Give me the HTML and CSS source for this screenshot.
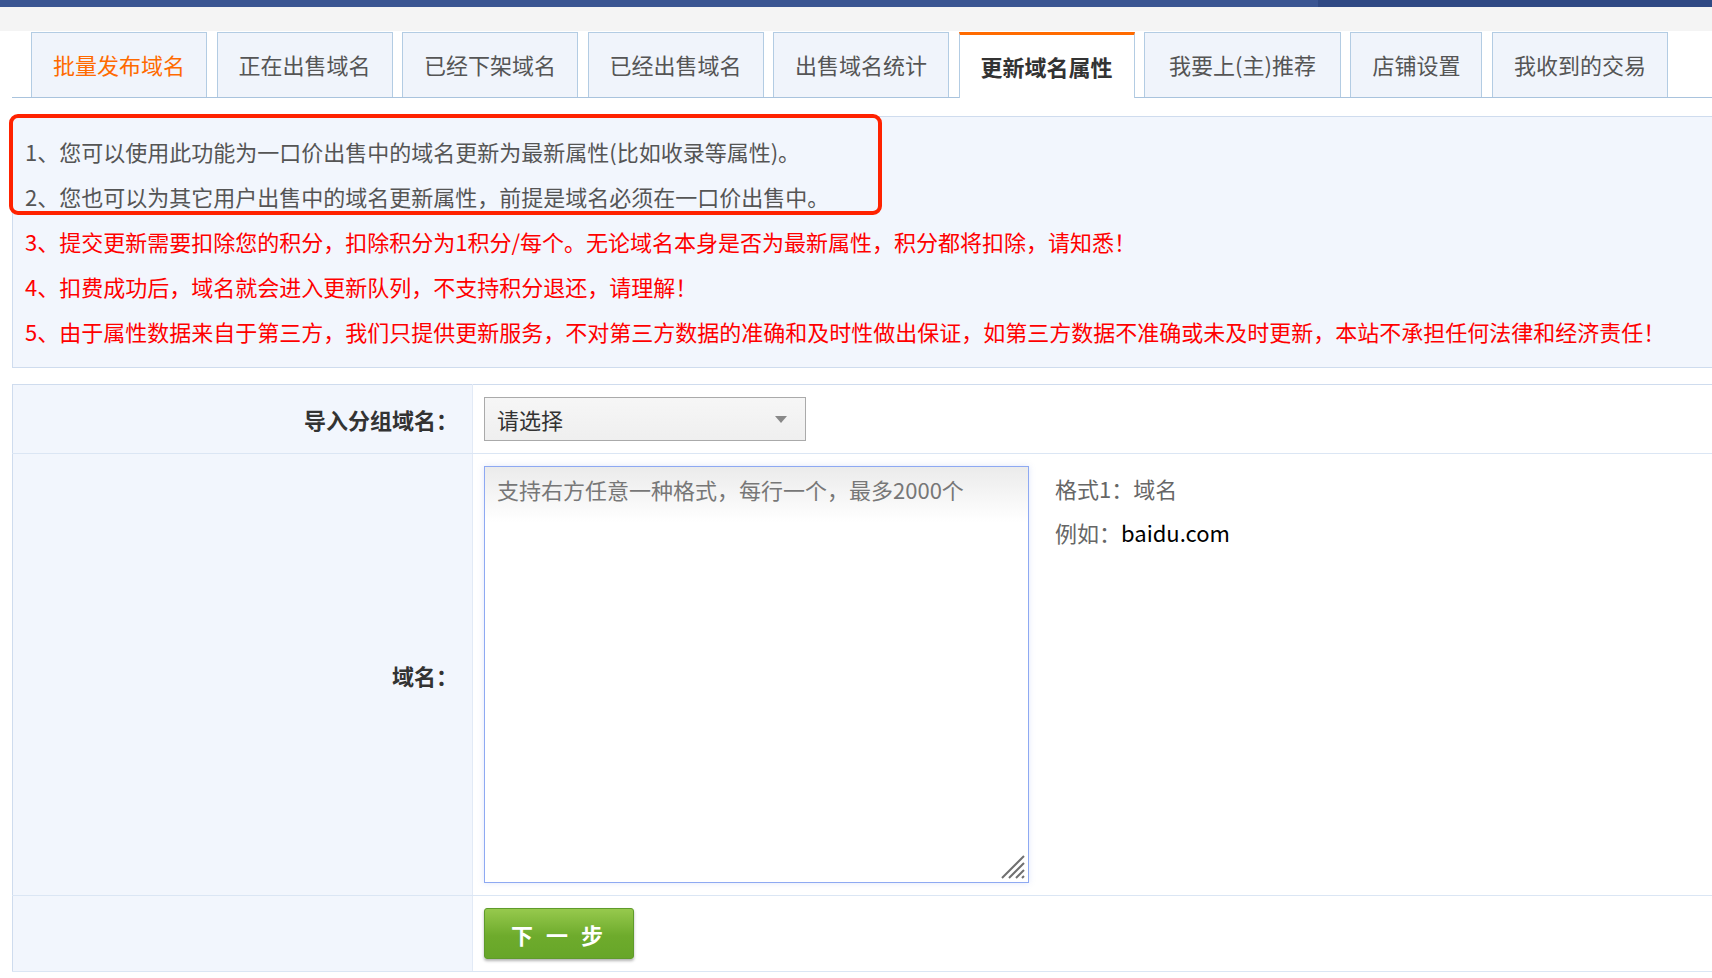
FILE: index.html
```html
<!DOCTYPE html>
<html lang="zh-CN">
<head>
	<meta charset="UTF-8">
	<title>更新域名属性</title>
	<link rel="stylesheet" href="styles.css">
</head>
<body>
	<div class="topbar"></div>
	<div class="subbar"></div>
	<div id="wrap">
		<ul class="tabs">
			<li class="first">批量发布域名</li>
			<li>正在出售域名</li>
			<li>已经下架域名</li>
			<li>已经出售域名</li>
			<li>出售域名统计</li>
			<li class="active">更新域名属性</li>
			<li class="wide">我要上(主)推荐</li>
			<li>店铺设置</li>
			<li>我收到的交易</li>
		</ul>

		<div class="notice">
			<p>1、您可以使用此功能为一口价出售中的域名更新为最新属性(比如收录等属性)。</p>
			<p>2、您也可以为其它用户出售中的域名更新属性，前提是域名必须在一口价出售中。</p>
			<p class="red">3、提交更新需要扣除您的积分，扣除积分为1积分/每个。无论域名本身是否为最新属性，积分都将扣除，请知悉！</p>
			<p class="red">4、扣费成功后，域名就会进入更新队列，不支持积分退还，请理解！</p>
			<p class="red">5、由于属性数据来自于第三方，我们只提供更新服务，不对第三方数据的准确和及时性做出保证，如第三方数据不准确或未及时更新，本站不承担任何法律和经济责任！</p>
			<div class="mark"></div>
		</div>

		<table class="form">
			<tr class="row-select">
				<td class="label">导入分组域名：</td>
				<td class="field">
					<div class="select">
						<select name="group">
							<option>请选择</option>
						</select>
					</div>
				</td>
			</tr>
			<tr class="row-domain">
				<td class="label">域名：</td>
				<td class="field">
					<div class="domain-box">
						<div class="area">
							<textarea name="domains" placeholder="支持右方任意一种格式，每行一个，最多2000个"></textarea>
							<svg class="grip" width="26" height="26" viewBox="0 0 26 26">
								<path d="M2 24 L24 2 M9 24 L24 9 M16 24 L24 16 M22 24 L24 22" stroke="#707070" stroke-width="2"/>
							</svg>
						</div>
						<div class="hints">
							<p>格式1：域名</p>
							<p>例如：<span class="eg">baidu.com</span></p>
						</div>
					</div>
				</td>
			</tr>
			<tr class="row-btn">
				<td class="label"></td>
				<td class="field">
					<button class="btn-next">下 一 步</button>
				</td>
			</tr>
		</table>
	</div>
</body>
</html>
```

FILE: styles.css
```css
*{
	margin: 0;
	padding: 0;
	box-sizing: border-box;
}
body{
	font-family: "Noto Sans CJK SC", "Liberation Sans", sans-serif;
	font-size: 22px;
	color: #555;
	background: #fff;
	overflow: hidden;
}
.topbar{
	height: 7px;
	background: linear-gradient(to right, #3a5592 77%, #2f4984 77%);
}
.subbar{
	height: 24px;
	background-color: #f4f4f4;
}
#wrap{
	width: 1760px;
	padding-left: 12px;
}

/* 标签栏 */
.tabs{
	display: flex;
	list-style: none;
	margin-top: 1px;
	padding-left: 19px;
	height: 66px;
	border-bottom: 1px solid #a9c3dd;
}
.tabs li{
	height: 65px;
	line-height: 63px;
	padding: 0 21px;
	margin-right: 9.5px;
	border: 1px solid #b3cce3;
	border-bottom: none;
	background-color: #f0f4fb;
	color: #555;
	white-space: nowrap;
}
.tabs li.wide{
	padding: 0 24px;
}
.tabs li.first{
	color: #ff6a00;
}
.tabs li.active{
	height: 66px;
	line-height: 62px;
	border-top: 3px solid #ff6a00;
	background-color: #fff;
	color: #333;
	font-weight: bold;
}

/* 提示区 */
.notice{
	position: relative;
	margin-top: 18px;
	padding: 12px 12px 13px;
	line-height: 45px;
	border: 1px solid #cfdcee;
	background-color: #f2f6fd;
	color: #555;
}
.notice p{
	white-space: nowrap;
}
.notice p.red{
	color: #f00;
}
.notice .mark{
	position: absolute;
	left: -4px;
	top: -3px;
	width: 873px;
	height: 101px;
	border: 4px solid #ff2200;
	border-radius: 9px;
}

/* 表单 */
.form{
	width: 100%;
	margin-top: 16px;
	border-collapse: collapse;
	border: 1px solid #cfdcee;
}
.form td{
	border-bottom: 1px solid #dbe6f4;
}
.form td.label{
	width: 460px;
	padding-right: 14px;
	text-align: right;
	font-weight: bold;
	color: #333;
	background-color: #f2f6fd;
	border-right: 1px solid #e2eaf6;
}
.form td.field{
	padding: 12px 11px;
	vertical-align: top;
}
.select{
	position: relative;
	width: 322px;
	height: 44px;
}
.select select{
	appearance: none;
	-webkit-appearance: none;
	width: 100%;
	height: 100%;
	padding-left: 12px;
	border: 1px solid #aaa;
	background: linear-gradient(#f6f6f6, #efefef);
	font-family: inherit;
	font-size: 22px;
	color: #333;
	outline: none;
}
.select:after{
	content: "";
	position: absolute;
	right: 19px;
	top: 19px;
	border-left: 6px solid transparent;
	border-right: 6px solid transparent;
	border-top: 7px solid #888;
	pointer-events: none;
}
.domain-box{
	display: flex;
}
.area{
	position: relative;
	width: 545px;
	height: 417px;
}
.area textarea{
	display: block;
	width: 100%;
	height: 100%;
	padding: 7px 12px;
	resize: none;
	border: 1px solid #8ea9f2;
	background: linear-gradient(#ebebeb, #fff 55px);
	box-shadow: 0 0 6px rgba(130, 160, 235, 0.25);
	font-family: inherit;
	font-size: 22px;
	line-height: 30px;
	color: #333;
	outline: none;
}
.area textarea::placeholder{
	color: #777;
}
.area .grip{
	position: absolute;
	right: 3px;
	bottom: 3px;
	pointer-events: none;
}
.hints{
	margin-left: 26px;
	line-height: 44px;
	color: #666;
}
.hints .eg{
	color: #000;
}
.btn-next{
	width: 150px;
	height: 51px;
	border: 1px solid #5f9b2b;
	border-radius: 3px;
	background: linear-gradient(#96c94d, #6eab2c 55%, #67a629);
	box-shadow: 0 2px 3px rgba(0, 0, 0, 0.3);
	color: #fff;
	font-family: inherit;
	font-size: 22px;
	font-weight: bold;
	letter-spacing: 4px;
	cursor: pointer;
}
```
